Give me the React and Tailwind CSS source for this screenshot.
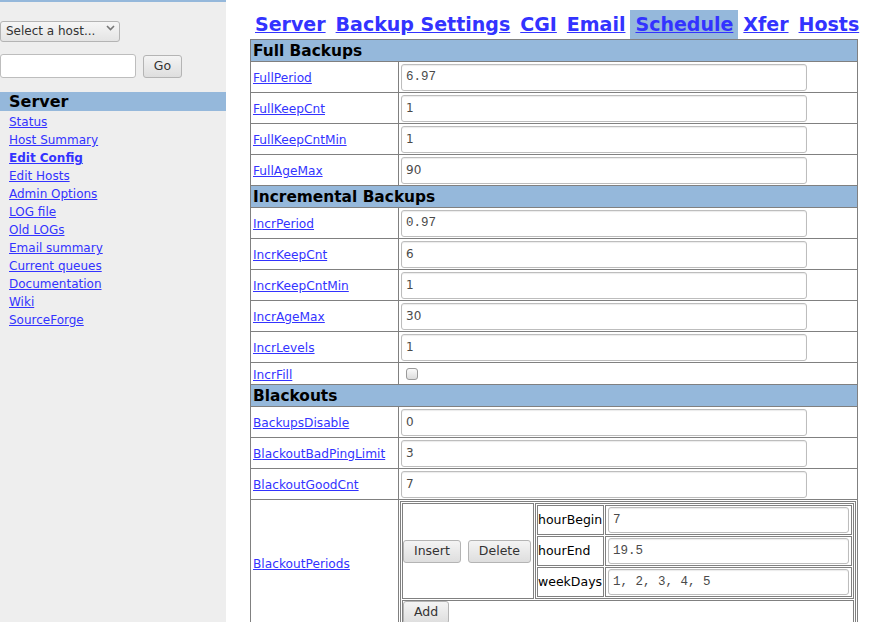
import React from 'react'

const font = { fontFamily: '"DejaVu Sans", Verdana, sans-serif' }

const sideLinks = [
  ['Status'],
  ['Host Summary'],
  ['Edit Config', true],
  ['Edit Hosts'],
  ['Admin Options'],
  ['LOG file'],
  ['Old LOGs'],
  ['Email summary'],
  ['Current queues'],
  ['Documentation'],
  ['Wiki'],
  ['SourceForge'],
]

const tabs = ['Server', 'Backup Settings', 'CGI', 'Email', 'Schedule', 'Xfer', 'Hosts']

const groups = [
  {
    title: 'Full Backups',
    rows: [
      { label: 'FullPeriod', value: '6.97', mono: true },
      { label: 'FullKeepCnt', value: '1' },
      { label: 'FullKeepCntMin', value: '1' },
      { label: 'FullAgeMax', value: '90' },
    ],
  },
  {
    title: 'Incremental Backups',
    rows: [
      { label: 'IncrPeriod', value: '0.97', mono: true },
      { label: 'IncrKeepCnt', value: '6' },
      { label: 'IncrKeepCntMin', value: '1' },
      { label: 'IncrAgeMax', value: '30' },
      { label: 'IncrLevels', value: '1' },
      { label: 'IncrFill', check: true },
    ],
  },
  {
    title: 'Blackouts',
    rows: [
      { label: 'BackupsDisable', value: '0' },
      { label: 'BlackoutBadPingLimit', value: '3' },
      { label: 'BlackoutGoodCnt', value: '7' },
    ],
  },
]

const periods = [
  { label: 'hourBegin', value: '7' },
  { label: 'hourEnd', value: '19.5' },
  { label: 'weekDays', value: '1, 2, 3, 4, 5' },
]

const Field = ({ value, mono, className = 'w-[406px] h-[27px]' }) => (
  <input
    readOnly
    value={value}
    className={`block ${className} px-[4px] rounded-[3px] border border-[#bdbdbd] bg-white shadow-[inset_0_1px_1px_rgba(0,0,0,0.08)] outline-none text-[#4a4a4a] ${
      mono ? 'text-[12.5px]' : 'text-[12px]'
    }`}
    style={{ fontFamily: mono ? '"Liberation Mono", monospace' : '"DejaVu Sans", sans-serif' }}
  />
)

const Btn = ({ children }) => (
  <button
    className="h-[23px] px-[10px] rounded-[3px] border border-[#b4b4b4] bg-gradient-to-b from-[#f4f4f4] to-[#dedede] text-[12.5px] text-[#333] leading-none"
    style={font}
  >
    {children}
  </button>
)

const cell = 'border border-[#808080]'

const App = () => {
  return (
    <div className="flex min-h-[622px] bg-white text-black" style={font}>
      <div className="w-[226px] shrink-0 bg-[#eeeeee] border-t-2 border-[#95b8db]">
        <div className="relative mt-[16px] w-[120px] h-[21px]">
          <select
            className="appearance-none w-[120px] h-[21px] pl-[5px] rounded-[3px] border border-[#b4b4b4] bg-gradient-to-b from-[#f6f6f6] to-[#e4e4e4] text-[12px] text-[#333] outline-none"
            style={font}
          >
            <option>Select a host...</option>
          </select>
          <svg className="absolute right-[5px] top-[7px] pointer-events-none" width="9" height="6" viewBox="0 0 9 6">
            <path d="M1 1l3.5 3.5L8 1" fill="none" stroke="#777" strokeWidth="1.6" />
          </svg>
        </div>
        <div className="flex items-center mt-[15px]">
          <input className="w-[136px] h-[24px] rounded-[3px] border border-[#bdbdbd] bg-white outline-none" readOnly />
          <button
            className="ml-[7px] w-[39px] h-[23px] rounded-[3px] border border-[#b4b4b4] bg-gradient-to-b from-[#f4f4f4] to-[#dedede] text-[12.5px] text-[#333]"
            style={font}
          >
            Go
          </button>
        </div>
        <div className="mt-[14px] h-[19px] bg-[#95b8db] pl-[9px] text-[16px] font-bold leading-[19px]">Server</div>
        <div className="pl-[9px] pt-[2px] flex flex-col items-start">
          {sideLinks.map(([name, bold]) => (
            <a key={name} href="#" className={`text-[12px] leading-[18px] text-[#3333ff] underline ${bold ? 'font-bold' : ''}`}>
              {name}
            </a>
          ))}
        </div>
      </div>

      <div className="pl-[24px] pt-[10px]">
        <div className="flex">
          {tabs.map((t) => (
            <a
              key={t}
              href="#"
              className={`px-[5px] h-[29px] text-[19px] font-bold leading-[29px] text-[#3333ff] underline ${
                t === 'Schedule' ? 'bg-[#95b8db]' : ''
              }`}
            >
              {t}
            </a>
          ))}
        </div>

        <table className="table-fixed border-collapse border border-[#808080] w-[608px] text-[12.2px] leading-[14px]">
          <colgroup>
            <col className="w-[148px]" />
            <col />
          </colgroup>
          <tbody>
            {groups.map((g) => (
              <React.Fragment key={g.title}>
                <tr>
                  <td colSpan={2} className={`${cell} bg-[#95b8db] h-[22px] px-[2px] py-0 text-[15.4px] font-bold leading-[20px]`}>
                    {g.title}
                  </td>
                </tr>
                {g.rows.map((r) => (
                  <tr key={r.label} className={r.check ? 'h-[22px]' : 'h-[31px]'}>
                    <td className={`${cell} px-[2px] pt-[2px] pb-0`}>
                      <a href="#" className="text-[#3333ff] underline">
                        {r.label}
                      </a>
                    </td>
                    <td className={`${cell} px-[2px] py-[1px]`}>
                      {r.check ? (
                        <span className="block ml-[5px] w-[12px] h-[12px] rounded-[3px] border border-[#9a9a9a] bg-gradient-to-b from-[#fafafa] to-[#dcdcdc]" />
                      ) : (
                        <Field value={r.value} mono={r.mono} />
                      )}
                    </td>
                  </tr>
                ))}
              </React.Fragment>
            ))}
            <tr>
              <td className={`${cell} px-[2px] pt-0 pb-[2px]`}>
                <a href="#" className="text-[#3333ff] underline">
                  BlackoutPeriods
                </a>
              </td>
              <td className={`${cell} p-[1px] align-top`}>
                <table className="table-fixed border-separate border-spacing-[1px] border border-[#808080] w-full">
                  <colgroup>
                    <col className="w-[132px]" />
                    <col />
                  </colgroup>
                  <tbody>
                    <tr>
                      <td className={`${cell} p-0 align-middle`}>
                        <div className="flex gap-[7px]">
                          <Btn>Insert</Btn>
                          <Btn>Delete</Btn>
                        </div>
                      </td>
                      <td className="p-0">
                        <table className="table-fixed border-separate border-spacing-[1px] border border-[#808080] w-full">
                          <colgroup>
                            <col className="w-[67px]" />
                            <col />
                          </colgroup>
                          <tbody>
                            {periods.map((p) => (
                              <tr key={p.label} className="h-[30px]">
                                <td className={`${cell} px-0 py-0 text-[12.5px]`}>{p.label}</td>
                                <td className={`${cell} px-[2px] py-[1px]`}>
                                  <Field value={p.value} mono className="w-full h-[26px]" />
                                </td>
                              </tr>
                            ))}
                          </tbody>
                        </table>
                      </td>
                    </tr>
                    <tr>
                      <td colSpan={2} className={`${cell} p-0 h-[26px] align-top`}>
                        <Btn>Add</Btn>
                      </td>
                    </tr>
                  </tbody>
                </table>
              </td>
            </tr>
          </tbody>
        </table>
      </div>
    </div>
  )
}

export default App
